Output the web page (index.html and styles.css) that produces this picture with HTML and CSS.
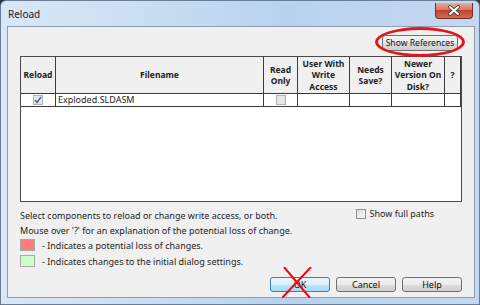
FILE: index.html
```html
<!DOCTYPE html>
<html lang="en">
<head>
  <meta charset="UTF-8">
  <title>Reload</title>
  <link rel="stylesheet" href="styles.css">
</head>
<body>
  <div class="window">
    <div class="titlebar">
      <span class="title">Reload</span>
      <div class="close">
        <svg width="14" height="11" viewBox="0 0 14 11">
          <path d="M3,2 L11,9 M11,2 L3,9" stroke="#3b3b3b" stroke-width="3.6" stroke-linecap="round"/>
          <path d="M3,2 L11,9 M11,2 L3,9" stroke="#ffffff" stroke-width="2" stroke-linecap="round"/>
        </svg>
      </div>
    </div>

    <div class="client">
      <div class="top-row">
        <div class="refs-wrap">
          <button class="btn">Show References</button>
          <span class="circle"></span>
        </div>
      </div>

      <div class="list">
        <div class="grid head">
          <div class="cell">Reload</div>
          <div class="cell">Filename</div>
          <div class="cell">Read<br>Only</div>
          <div class="cell">User With<br>Write<br>Access</div>
          <div class="cell">Needs<br>Save?</div>
          <div class="cell">Newer<br>Version On<br>Disk?</div>
          <div class="cell">?</div>
        </div>
        <div class="grid row">
          <div class="cell center">
            <span class="chk disabled">
              <svg width="8" height="8" viewBox="0 0 8 8"><path d="M1,4 L3,6.5 L7,1" fill="none" stroke="#4d63a8" stroke-width="1.5"/></svg>
            </span>
          </div>
          <div class="cell name">Exploded.SLDASM</div>
          <div class="cell center"><span class="chk disabled"></span></div>
          <div class="cell"></div>
          <div class="cell"></div>
          <div class="cell"></div>
          <div class="cell"></div>
        </div>
      </div>

      <div class="info-line">
        <span>Select components to reload or change write access, or both.</span>
        <label class="full-paths"><span class="chk"></span>Show full paths</label>
      </div>
      <div class="info-line">Mouse over '?' for an explanation of the potential loss of change.</div>
      <div class="legend first"><span class="swatch red"></span>- Indicates a potential loss of changes.</div>
      <div class="legend"><span class="swatch green"></span>- Indicates changes to the initial dialog settings.</div>

      <div class="buttons">
        <div class="ok-wrap">
          <button class="btn default">OK</button>
          <svg class="cross" width="30" height="31" viewBox="0 0 30 31">
            <path d="M2,0 L28,31 M29,0 L0,31" stroke="#ff0000" stroke-width="2"/>
          </svg>
        </div>
        <button class="btn">Cancel</button>
        <button class="btn">Help</button>
      </div>
    </div>
  </div>
</body>
</html>
```

FILE: styles.css
```css
* { box-sizing: border-box; }

body {
  margin: 0;
  width: 480px;
  height: 305px;
  overflow: hidden;
  font-family: "Noto Sans", "DejaVu Sans", sans-serif;
  font-size: 9px;
  color: #1e1e1e;
  background: #2b3644;
}

.window {
  height: 305px;
  display: flex;
  flex-direction: column;
  border: 1px solid #6a7d94;
  border-radius: 6px 6px 0 0;
  background: linear-gradient(to right, #dae7f5 0%, #cadef3 30%, #b8d2ee 60%, #c4d9ef 100%);
}

.titlebar {
  height: 25px;
  display: flex;
  justify-content: space-between;
  align-items: center;
  padding: 0 6px 0 7px;
}
.title { font-size: 10px; color: #1a1a1a; }

.close {
  align-self: flex-start;
  margin-top: 2px;
  width: 38px;
  height: 16px;
  display: flex;
  align-items: center;
  justify-content: center;
  border: 1px solid #7b2b22;
  border-top: none;
  border-radius: 0 0 4px 4px;
  background: linear-gradient(#eaa99b 0%, #d77865 45%, #c2432d 50%, #d06a55 100%);
}

.client {
  flex: 1;
  margin: 0 4px 6px 6px;
  border: 1px solid #8b9cb3;
  background: #f0f0f0;
  padding: 0 12px;
  display: flex;
  flex-direction: column;
}

.top-row {
  display: flex;
  justify-content: flex-end;
  padding-right: 4px;
  margin-top: 8px;
}
.refs-wrap { position: relative; display: flex; }
.circle {
  position: absolute;
  left: -7px;
  top: -8px;
  width: 90px;
  height: 30px;
  border: 3px solid #e3151d;
  border-radius: 50%;
}

.btn {
  font-family: inherit;
  font-size: 9px;
  color: #111;
  height: 16px;
  padding: 0;
  white-space: nowrap;
  border: 1px solid #707070;
  border-radius: 3px;
  background: linear-gradient(#f3f3f3 0%, #ebebeb 50%, #dddddd 50%, #d0d0d0 100%);
}
.refs-wrap .btn { width: 76px; font-size: 8.6px; }

.list {
  margin-top: 5px;
  height: 146px;
  border: 1px solid #4a4a4a;
  background: #fff;
}

.grid {
  display: grid;
  grid-template-columns: 35px 208px 34px 52px 42px 53px 16px;
  border-bottom: 1px solid #3c3c3c;
}
.cell { border-right: 1px solid #3c3c3c; }
.head { height: 37px; background: #f0f0f0; }
.head .cell {
  display: flex;
  align-items: center;
  justify-content: center;
  text-align: center;
  font-weight: bold;
  font-size: 8.5px;
  line-height: 11.5px;
  color: #222;
  white-space: nowrap;
}
.row { height: 13px; }
.row .cell { display: flex; align-items: center; }
.row .center { justify-content: center; }
.row .name { padding-left: 2px; line-height: 12px; }

.chk {
  width: 10px;
  height: 10px;
  display: inline-flex;
  align-items: center;
  justify-content: center;
  border: 1px solid #8e8f8f;
  background: linear-gradient(135deg, #dcdcdc, #fbfbfb);
}
.chk.disabled { border-color: #b1b1b1; background: #e6e6e6; }

.info-line {
  display: flex;
  height: 15px;
  align-items: center;
}
.list + .info-line { margin-top: 6px; }
.full-paths {
  margin-left: auto;
  margin-right: 28px;
  align-self: flex-start;
  display: flex;
  align-items: center;
  gap: 3px;
  height: 11px;
}

.legend {
  display: flex;
  align-items: center;
  height: 12px;
  margin-top: 4px;
}
.legend.first { margin-top: 1px; }
.swatch {
  width: 15px;
  height: 12px;
  margin-right: 7px;
  border: 1px solid #a8a8a8;
}
.swatch.red { background: #ff7a7a; }
.swatch.green { background: #ccffcc; }

.buttons {
  margin-top: auto;
  margin-bottom: 5px;
  display: flex;
  justify-content: flex-end;
  gap: 6px;
}
.buttons .btn { width: 60px; height: 15px; }
.btn.default {
  border-color: #3c7fb1;
  background: linear-gradient(#eaf6fd 0%, #d9f0fc 50%, #bee6fd 50%, #a7d9f5 100%);
}
.ok-wrap { position: relative; display: flex; }
.cross {
  position: absolute;
  left: 12px;
  top: -10px;
}
```
